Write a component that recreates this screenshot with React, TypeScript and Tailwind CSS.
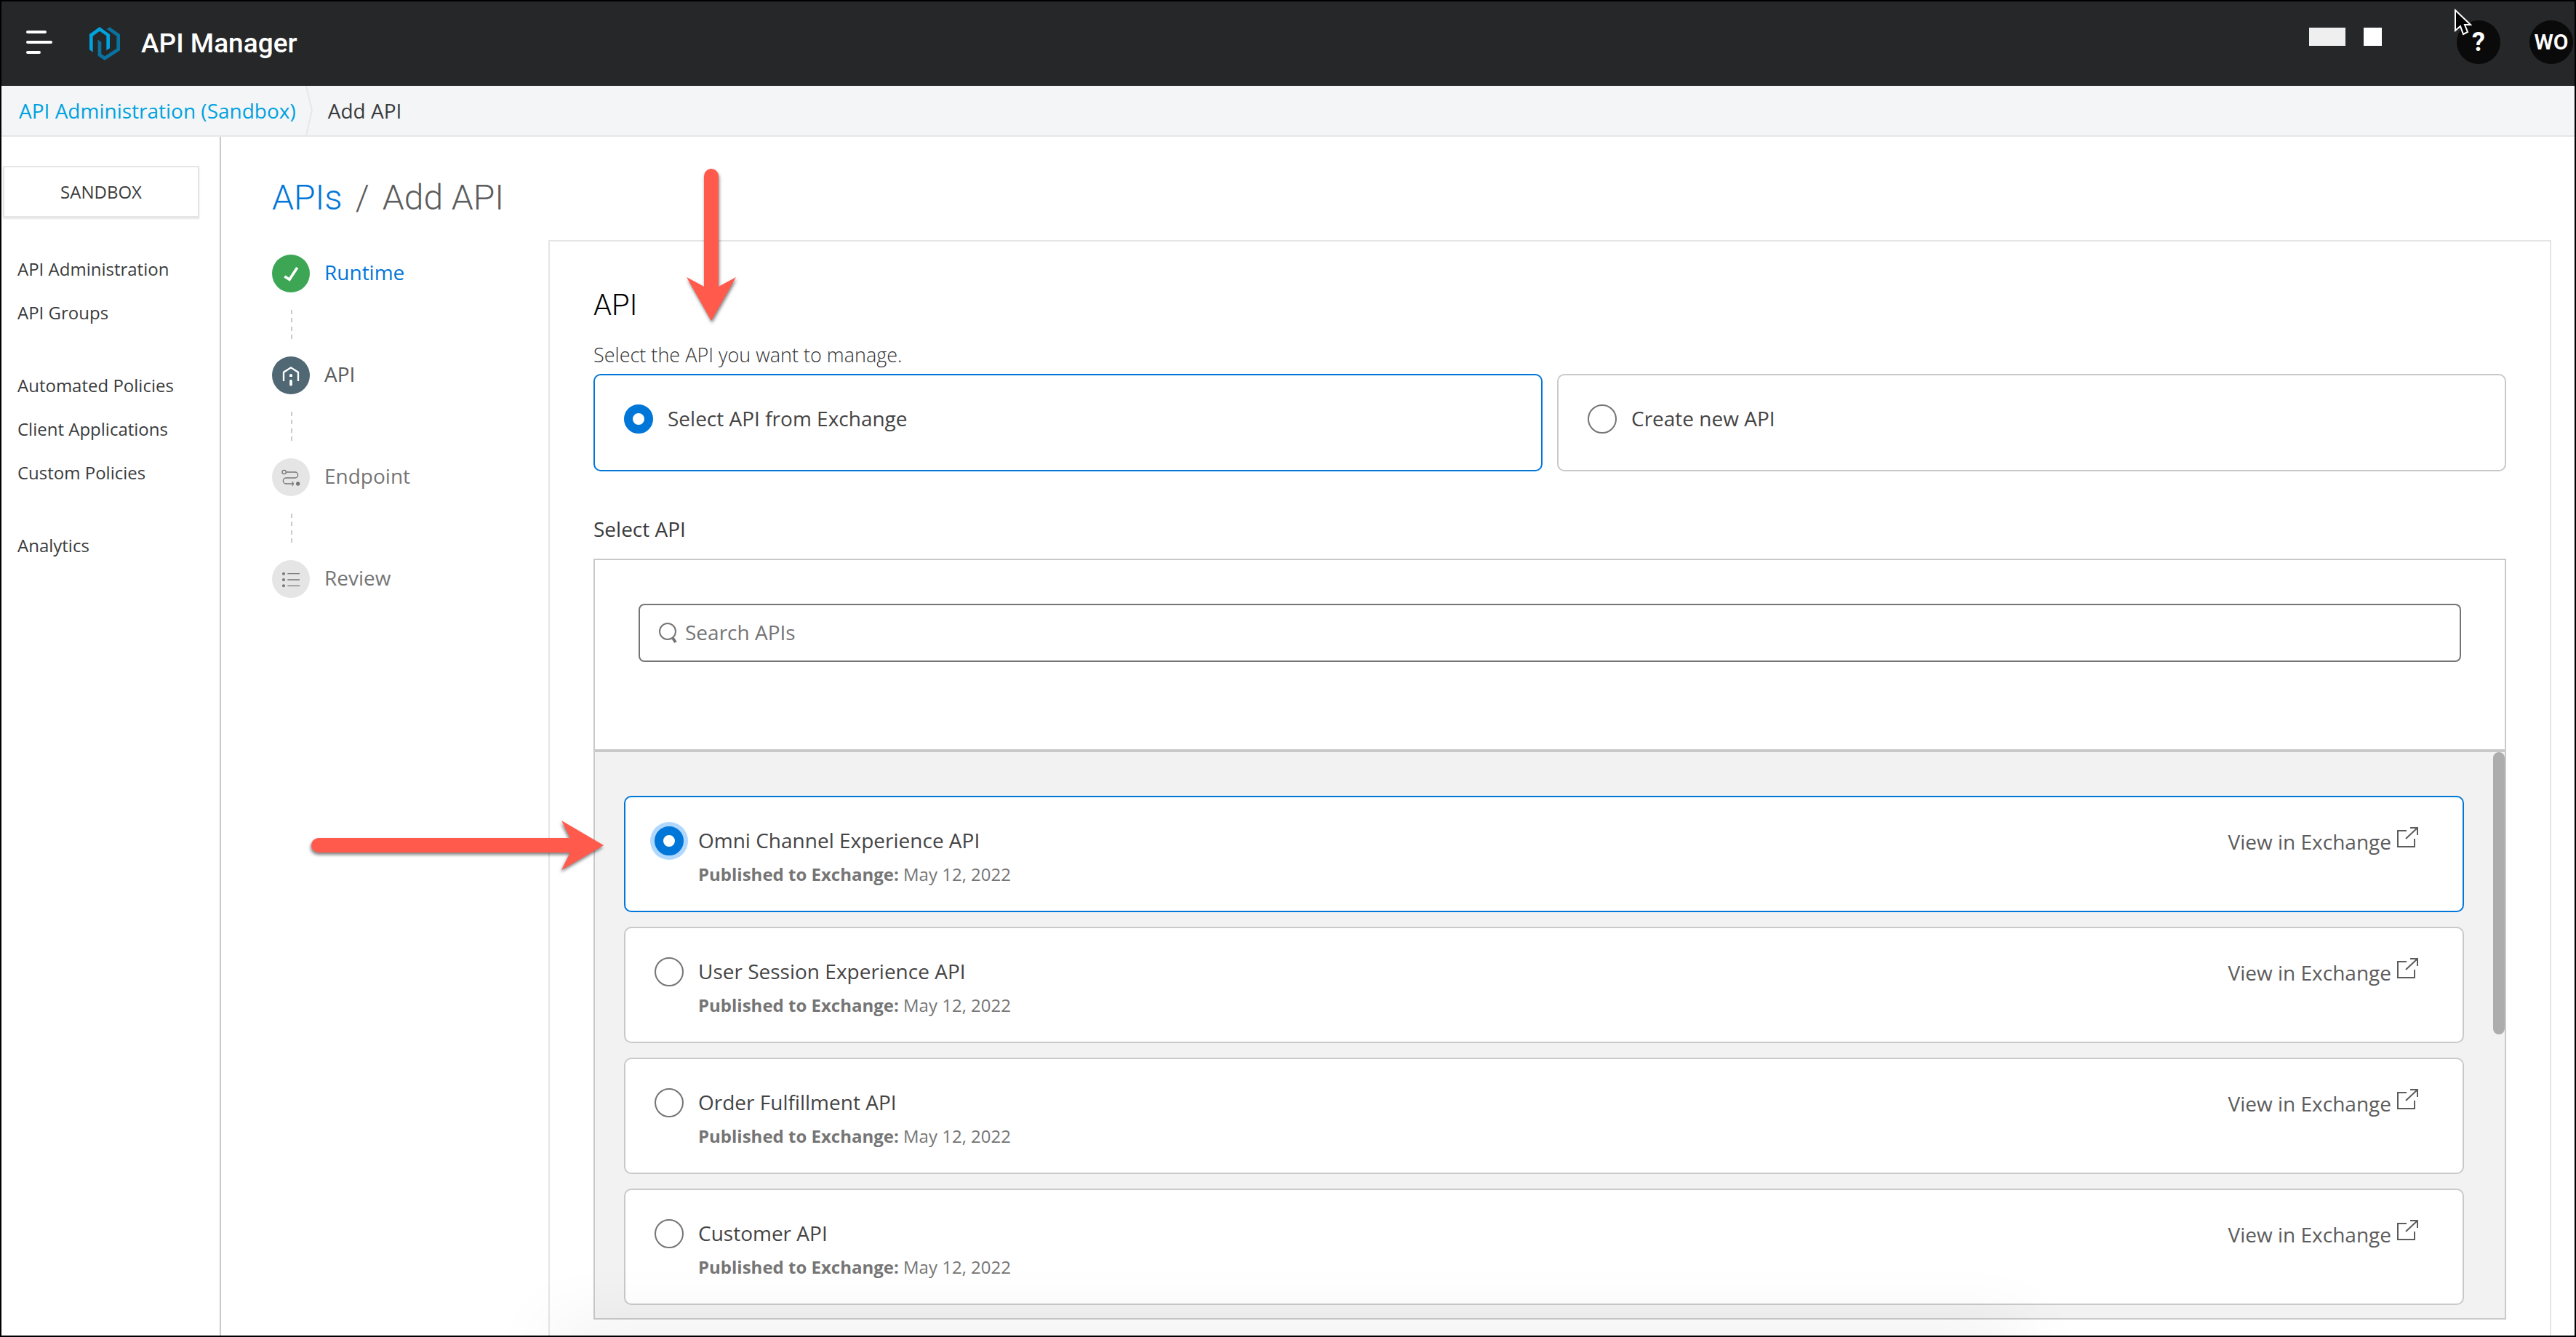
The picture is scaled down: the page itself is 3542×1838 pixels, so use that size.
import type { ReactNode } from "react";

const navGroups = [
  ["API Administration", "API Groups"],
  ["Automated Policies", "Client Applications", "Custom Policies"],
  ["Analytics"],
];

const apis = [
  { id: "omni", name: "Omni Channel Experience API", date: "May 12, 2022" },
  { id: "session", name: "User Session Experience API", date: "May 12, 2022" },
  { id: "order", name: "Order Fulfillment API", date: "May 12, 2022" },
  { id: "customer", name: "Customer API", date: "May 12, 2022" },
];

function MenuIcon() {
  return (
    <svg width="36" height="32" viewBox="0 0 36 32" stroke="#fff" strokeWidth="4" strokeLinecap="round">
      <path d="M2 2H26M2 16H34M2 30H18" />
    </svg>
  );
}

function Logo() {
  return (
    <svg width="42" height="46" viewBox="0 0 126 138">
      <path fill="#0a729f" d="M71 10L83 1L126 31V97L63 138L35 119V53L49 62V112L63 121L112 89V38L84 18Z" />
      <path fill="#00a2df" d="M0 30L42 0L84 31V88L70 97V37L42 17L14 38V104L0 94Z" />
    </svg>
  );
}

function CursorIcon() {
  return (
    <svg width="24" height="38" viewBox="0 0 24 38">
      <path d="M1 2V30L8 24L12 35L18 32L14 22H22Z" fill="#000" stroke="#fff" strokeWidth="2" />
    </svg>
  );
}

function CheckIcon() {
  return (
    <svg width="52" height="52" viewBox="0 0 156 156" fill="none" stroke="#fff" strokeWidth="11">
      <path d="M52 90L72 103L104 54" />
    </svg>
  );
}

function ApiIcon() {
  return (
    <svg width="52" height="52" viewBox="0 0 156 156" fill="none" stroke="#fff" strokeWidth="7">
      <path d="M48 102V65L78 46L108 65V102" />
      <path d="M78 101V116" strokeWidth="11" strokeLinecap="round" />
      <path d="M72 84V78a6 6 0 0 1 12 0V84Z" fill="#fff" stroke="none" />
    </svg>
  );
}

function EndpointIcon() {
  return (
    <svg width="52" height="52" viewBox="0 0 156 156" fill="none" stroke="#757575" strokeWidth="4">
      <circle cx="50" cy="57" r="8" />
      <path d="M58 57H95a12 12 0 0 1 0 24H58a12 12 0 0 0 0 24H90" />
      <path d="M83 97Q92 105 83 113" />
      <circle cx="107" cy="105" r="8" fill="#757575" stroke="none" />
    </svg>
  );
}

function ReviewIcon() {
  return (
    <svg width="52" height="52" viewBox="0 0 156 156" fill="none" stroke="#757575" strokeWidth="4">
      <g fill="#757575" stroke="none">
        <circle cx="48" cy="56" r="6" />
        <circle cx="48" cy="81" r="6" />
        <circle cx="48" cy="106" r="6" />
      </g>
      <path d="M64 56H114M64 81H114M64 106H114" />
    </svg>
  );
}

function SearchIcon() {
  return (
    <svg width="26" height="30" viewBox="0 0 26 30" fill="none" stroke="#757575">
      <circle cx="13" cy="13" r="11" strokeWidth="2" />
      <path d="M20 22L24 28" strokeWidth="4" />
    </svg>
  );
}

function ExternalIcon() {
  return (
    <svg width="30" height="30" viewBox="0 0 30 30" fill="none" stroke="#5c5c5c" strokeWidth="2">
      <path d="M13 6H1V28H24V17" />
      <path d="M12 17L28 2M18 2H28V12" />
    </svg>
  );
}

const steps: { label: string; icon: ReactNode; circle: string; text: string }[] = [
  { label: "Runtime", icon: <CheckIcon />, circle: "bg-[#3ca655]", text: "text-[#0176d9]" },
  { label: "API", icon: <ApiIcon />, circle: "bg-[#506774]", text: "text-[#5c5c5c]" },
  { label: "Endpoint", icon: <EndpointIcon />, circle: "bg-[#e5e5e5]", text: "text-[#757575]" },
  { label: "Review", icon: <ReviewIcon />, circle: "bg-[#e5e5e5]", text: "text-[#757575]" },
];

const radioClass =
  "size-10 shrink-0 appearance-none rounded-full border-2 border-[#757575] bg-white checked:border-[12px] checked:border-[#0176d9]";

function Header() {
  return (
    <header className="flex h-[116px] shrink-0 items-center bg-[#262728] pl-[34px] font-[Roboto,sans-serif] text-white">
      <button aria-label="Open menu" className="mb-1">
        <MenuIcon />
      </button>
      <a href="#home" className="ml-[51px] flex items-center gap-[29px]">
        <Logo />
        <span className="text-[37px] leading-[48px] font-medium">API Manager</span>
      </a>
      <div className="mb-1 ml-auto flex items-center">
        <div className="mb-4 mr-[103px] flex">
          <span className="h-[25px] w-[50px] bg-[#efefef]" />
          <span className="ml-[25px] size-[25px] bg-white" />
        </div>
        <button aria-label="Help" className="relative size-[60px] rounded-full bg-[#0a0a0a] text-[36px] leading-[60px] font-bold">
          ?
          <span className="absolute -top-4 -left-[3px]">
            <CursorIcon />
          </span>
        </button>
        <button className="mr-0.5 ml-10 size-[60px] rounded-full bg-[#0a0a0a] text-[30px] leading-[60px] font-semibold">WO</button>
      </div>
    </header>
  );
}

function Breadcrumb() {
  return (
    <nav aria-label="Breadcrumb" className="flex h-[70px] shrink-0 items-center border-b-2 border-[#e6e7e8] bg-[#f4f5f7] pl-6 text-[28px] leading-[38px]">
      <a href="#administration" className="text-[#00a2df]">
        API Administration (Sandbox)
      </a>
      <svg width="12" height="68" viewBox="0 0 12 68" fill="none" stroke="#e6e7e8" strokeWidth="2" className="mr-5 ml-3">
        <path d="M2 0L10 34L2 68" />
      </svg>
      <span className="text-[#3a3b3c]">Add API</span>
    </nav>
  );
}

function Sidebar() {
  return (
    <aside className="w-[302px] shrink-0 border-r-2 border-[#c9c9c9] pt-10 text-[24px] text-[#3a3b3c]">
      <button className="ml-0.5 h-[71px] w-[270px] border-2 border-[#e5e5e5] shadow-[0_2px_2px_#e5e5e5]">SANDBOX</button>
      <nav className="mt-[41px] flex flex-col gap-10 pl-[22px]">
        {navGroups.map((group) => (
          <ul key={group[0]}>
            {group.map((item) => (
              <li key={item}>
                <a href="#nav" className="block leading-[60px]">
                  {item}
                </a>
              </li>
            ))}
          </ul>
        ))}
      </nav>
    </aside>
  );
}

function StepConnector() {
  return (
    <div className="my-6 ml-[26px] flex h-10 w-0.5 flex-col justify-between">
      {[0, 1, 2, 3].map((dash) => (
        <span key={dash} className="h-1.5 bg-[#c9c9c9]" />
      ))}
    </div>
  );
}

function Stepper() {
  return (
    <ol className="w-[380px] shrink-0 pt-5 text-[28px] leading-[38px]">
      {steps.map((step, i) => (
        <li key={step.label}>
          {i > 0 && <StepConnector />}
          <div className="flex items-center gap-5">
            <span className={`size-[52px] rounded-full ${step.circle}`}>{step.icon}</span>
            <span className={`mb-1 ${step.text}`}>{step.label}</span>
          </div>
        </li>
      ))}
    </ol>
  );
}

function SourceTile({ label, selected }: { label: string; selected?: boolean }) {
  return (
    <label
      className={`flex flex-1 gap-5 rounded-[10px] border-2 px-10 pt-10 pb-[50px] leading-[38px] text-[#444] ${
        selected ? "border-[#0176d9]" : "border-[#c9c9c9]"
      }`}
    >
      <input type="radio" name="source" defaultChecked={selected} className={radioClass} />
      {label}
    </label>
  );
}

function ApiCard({ id, name, date, selected }: { id: string; name: string; date: string; selected: boolean }) {
  return (
    <li
      className={`flex min-h-[160px] items-start rounded-[10px] border-2 bg-white pt-10 pr-[60px] pl-10 ${
        selected ? "border-[#0176d9]" : "border-[#c9c9c9]"
      }`}
    >
      <label className="flex flex-1 gap-5">
        <input
          type="radio"
          name="api"
          value={id}
          defaultChecked={selected}
          className={`${radioClass} checked:ring-6 checked:ring-[#b0d8ff]`}
        />
        <span className="flex flex-col gap-[10px]">
          <span className="leading-[38px] text-[#444]">{name}</span>
          <span className="text-[24px] leading-9 text-[#757575]">
            <b>Published to Exchange:</b> {date}
          </span>
        </span>
      </label>
      <a href="#exchange" className="flex items-start gap-2 text-[#5c5c5c]">
        <span className="leading-[42px]">View in Exchange</span>
        <ExternalIcon />
      </a>
    </li>
  );
}

function DownArrow() {
  return (
    <svg width="80" height="224" viewBox="0 0 80 224" className="absolute top-[228px] left-[936px] drop-shadow-[1px_3px_2px_rgba(0,0,0,0.5)]">
      <path fill="#ff5a4c" d="M30 12a10 10 0 0 1 20 0V164L74 151L40 211L6 151L30 164Z" />
    </svg>
  );
}

function RightArrow() {
  return (
    <svg width="410" height="80" viewBox="0 0 410 80" className="absolute top-[1120px] left-[424px] drop-shadow-[-1px_3px_2px_rgba(0,0,0,0.5)]">
      <path fill="#ff5a4c" d="M12 30H358L346 6L404 40L346 74L358 50H12a10 10 0 0 1 0-20Z" />
    </svg>
  );
}

export default function App() {
  return (
    <div className="relative flex h-screen flex-col overflow-hidden border-2 border-black bg-white font-['Open_Sans',sans-serif]">
      <Header />
      <Breadcrumb />
      <div className="flex min-h-0 flex-1">
        <Sidebar />
        <main className="flex min-w-0 flex-1 flex-col pr-8 pl-[70px]">
          <h1 className="flex gap-[18px] pt-[52px] pb-[26px] font-[Roboto,sans-serif] text-[48px] leading-[64px] font-light text-[#5c5c5c]">
            <a href="#apis" className="text-[#0176d9]">
              APIs
            </a>
            <span>/</span>
            <span>Add API</span>
          </h1>
          <div className="flex min-h-0 flex-1">
            <Stepper />
            <section className="min-w-0 flex-1 border-2 border-b-0 border-[#e5e5e5] px-[60px] pt-16 text-[28px]">
              <h2 className="font-[Roboto,sans-serif] text-[40px] leading-[48px] font-light text-black">API</h2>
              <p className="mt-[25px] text-[27px] leading-[38px] font-light text-[#333]">Select the API you want to manage.</p>
              <div className="mt-[7px] flex gap-5">
                <SourceTile label="Select API from Exchange" selected />
                <SourceTile label="Create new API" />
              </div>
              <h3 className="mt-[60px] leading-[38px] text-[#3a3b3c]">Select API</h3>
              <div className="mt-[22px] border-2 border-[#c9c9c9]">
                <div className="border-b-2 border-[#c9c9c9] px-[60px] pt-[60px] pb-[120px]">
                  <label className="flex h-20 items-center gap-[11px] rounded-lg border-2 border-[#757575] pl-[25px]">
                    <SearchIcon />
                    <input
                      type="text"
                      aria-label="Search APIs"
                      placeholder="Search APIs"
                      className="mb-0.5 min-w-0 flex-1 leading-[38px] outline-none placeholder:text-[#757575]"
                    />
                  </label>
                </div>
                <div className="relative border-t-2 border-[#c9c9c9] bg-[#f2f2f2] pt-[60px] pr-14 pb-[18px] pl-10">
                  <ul className="flex flex-col gap-5">
                    {apis.map((api, i) => (
                      <ApiCard key={api.id} {...api} selected={i === 0} />
                    ))}
                  </ul>
                  <div className="absolute top-0 right-0 h-[388px] w-4 rounded-full bg-[#adadad]" />
                </div>
              </div>
            </section>
          </div>
        </main>
      </div>
      <DownArrow />
      <RightArrow />
      <div className="pointer-events-none absolute inset-x-[760px] -bottom-10 h-10 shadow-[0_0_100px_rgba(0,0,0,0.12)]" />
    </div>
  );
}
